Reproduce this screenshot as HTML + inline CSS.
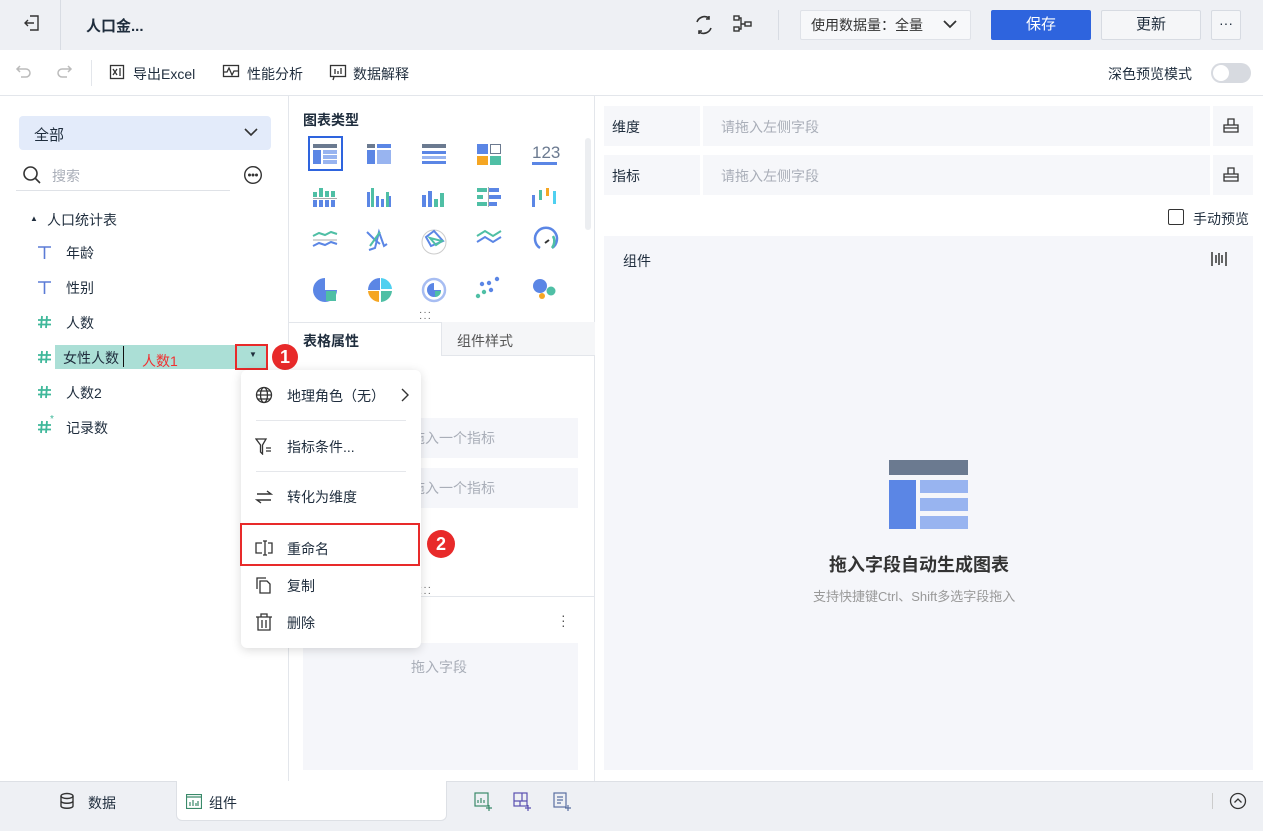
<!DOCTYPE html>
<html><head><meta charset="utf-8"><style>
*{box-sizing:border-box;margin:0;padding:0}
body{width:1263px;height:831px;overflow:hidden;font-family:"Liberation Sans","Noto Sans CJK SC",sans-serif;font-size:14px;color:#1f2d3d;background:#fff;position:relative}
.a{position:absolute}
.top{left:0;top:0;width:1263px;height:50px;background:#eef0f4}
.tb{left:0;top:50px;width:1263px;height:46px;background:#fff;border-bottom:1px solid #e3e6eb}
.btn{border:1px solid #d7dbe2;border-radius:2px;background:#f5f6f8;text-align:center;line-height:28px}
.ph{color:#a9aeb8}
.hs{position:absolute;width:14px;height:14px}
</style></head><body>
<div class="a top"></div>
<svg class="a" style="left:22px;top:13px" width="20" height="20" viewBox="0 0 20 20" fill="none" stroke="#333" stroke-width="1.4"><path d="M8 3h8v14H8M12 10H3M6 7l-3 3 3 3"/></svg>
<div class="a" style="left:60px;top:0;width:1px;height:50px;background:#d8dce3"></div>
<div class="a" style="left:86px;top:15px;font-size:15px;font-weight:bold">人口金...</div>
<svg class="a" style="left:693px;top:14px" width="22" height="22" viewBox="0 0 22 22" fill="none" stroke="#333" stroke-width="1.6"><path d="M4 8a8 8 0 0 1 12-4M18 14a8 8 0 0 1-12 4M16 2v3h-3M6 20v-3h3"/></svg>
<svg class="a" style="left:731px;top:14px" width="22" height="20" viewBox="0 0 22 20" fill="none" stroke="#333" stroke-width="1.4"><rect x="3" y="2" width="5" height="4"/><rect x="3" y="13" width="5" height="4"/><rect x="14" y="8" width="6" height="4"/><path d="M8 4h2v11H8M10 10h4"/></svg>
<div class="a" style="left:778px;top:10px;width:1px;height:30px;background:#d8dce3"></div>
<div class="a btn" style="left:800px;top:10px;width:171px;height:30px;background:#f7f8fa;border-color:#dfe2e8;text-align:left;padding-left:10px;color:#333">使用数据量：全量</div>
<svg class="a" style="left:942px;top:18px" width="16" height="12" viewBox="0 0 16 12" fill="none" stroke="#333" stroke-width="1.8"><path d="M2 3l6 6 6-6"/></svg>
<div class="a" style="left:991px;top:10px;width:100px;height:30px;background:#2e64de;border-radius:2px;color:#fff;text-align:center;line-height:30px;font-size:15px">保存</div>
<div class="a btn" style="left:1101px;top:10px;width:100px;height:30px;font-size:15px">更新</div>
<div class="a btn" style="left:1211px;top:10px;width:30px;height:30px;line-height:24px">···</div>
<div class="a tb"></div>
<svg class="a" style="left:15px;top:63px" width="18" height="18" viewBox="0 0 18 18" fill="none" stroke="#bbb" stroke-width="1.5"><path d="M5 3L2 6l3 3M2 6h9a4 4 0 0 1 0 8H6"/></svg>
<svg class="a" style="left:55px;top:63px" width="18" height="18" viewBox="0 0 18 18" fill="none" stroke="#bbb" stroke-width="1.5"><path d="M13 3l3 3-3 3M16 6H7a4 4 0 0 0 0 8h5"/></svg>
<div class="a" style="left:91px;top:60px;width:1px;height:26px;background:#e3e6eb"></div>
<svg class="a" style="left:109px;top:64px" width="16" height="16" viewBox="0 0 16 16" fill="none" stroke="#333" stroke-width="1.3"><rect x="1.5" y="1.5" width="13" height="13"/><path d="M4 5l4 6M8 5l-4 6M11 4v8"/></svg>
<div class="a" style="left:133px;top:64px">导出Excel</div>
<svg class="a" style="left:222px;top:64px" width="18" height="16" viewBox="0 0 18 16" fill="none" stroke="#333" stroke-width="1.3"><rect x="1.5" y="1.5" width="15" height="11"/><path d="M2 8h3l2-4 3 7 2-4h4"/></svg>
<div class="a" style="left:247px;top:64px">性能分析</div>
<svg class="a" style="left:329px;top:64px" width="18" height="17" viewBox="0 0 18 17" fill="none" stroke="#333" stroke-width="1.3"><rect x="1.5" y="1.5" width="15" height="11"/><path d="M6 5v5M9 7v3M12 4v6M5 13l-1 3"/></svg>
<div class="a" style="left:353px;top:64px">数据解释</div>
<div class="a" style="left:1108px;top:64px">深色预览模式</div>
<div class="a" style="left:1211px;top:63px;width:40px;height:20px;border-radius:10px;background:#d7dae0"></div>
<div class="a" style="left:1213px;top:65px;width:16px;height:16px;border-radius:8px;background:#fff"></div>
<div class="a" style="left:288px;top:96px;width:1px;height:685px;background:#e3e6eb"></div>
<div class="a" style="left:19px;top:116px;width:252px;height:34px;background:#e3ebfa;border-radius:4px;padding:8px 0 0 15px;font-size:15px">全部</div>
<svg class="a" style="left:244px;top:127px" width="14" height="10" viewBox="0 0 14 10" fill="none" stroke="#333" stroke-width="1.6"><path d="M1 2l6 6 6-6"/></svg>
<svg class="a" style="left:22px;top:165px" width="20" height="20" viewBox="0 0 20 20" fill="none" stroke="#333" stroke-width="1.6"><circle cx="8.5" cy="8.5" r="6.5"/><path d="M13.5 13.5l4.5 4.5"/></svg>
<div class="a ph" style="left:52px;top:166px">搜索</div>
<div class="a" style="left:16px;top:190px;width:214px;height:1px;background:#dfe2e7"></div>
<svg class="a" style="left:243px;top:165px" width="20" height="20" viewBox="0 0 20 20" fill="none" stroke="#333" stroke-width="1.4"><circle cx="10" cy="10" r="8.3"/><circle cx="6.5" cy="10" r=".8" fill="#333"/><circle cx="10" cy="10" r=".8" fill="#333"/><circle cx="13.5" cy="10" r=".8" fill="#333"/></svg>
<div class="a" style="left:30px;top:214px;font-size:8px">▲</div>
<div class="a" style="left:47px;top:210px">人口统计表</div>
<svg width="0" height="0" style="position:absolute"><defs><g id="h"><path d="M5 1L4 13M10 1L9 13M1 5h13M1 9.5h13" stroke="#3fb89a" stroke-width="1.8" fill="none"/></g><g id="t"><path d="M1 2h13M7.5 2v12" stroke="#5b7bd6" stroke-width="1.6" fill="none"/></g></defs></svg>
<svg class="hs" style="left:37px;top:245px"><use href="#t"/></svg><div class="a" style="left:66px;top:243px">年龄</div>
<svg class="hs" style="left:37px;top:280px"><use href="#t"/></svg><div class="a" style="left:66px;top:278px">性别</div>
<svg class="hs" style="left:37px;top:315px"><use href="#h"/></svg><div class="a" style="left:66px;top:313px">人数</div>
<svg class="hs" style="left:37px;top:350px"><use href="#h"/></svg>
<div class="a" style="left:55px;top:345px;width:212px;height:24px;background:#abdfd6"></div>
<div class="a" style="left:63px;top:348px">女性人数</div>
<div class="a" style="left:123px;top:346px;width:1px;height:21px;background:#111"></div>
<div class="a" style="left:142px;top:351px;color:#f03030">人数1</div>
<div class="a" style="left:235px;top:344px;width:33px;height:26px;border:2px solid #e82a2a"></div>
<div class="a" style="left:249px;top:350px;font-size:8px">▼</div>
<div class="a" style="left:272px;top:344px;width:26px;height:26px;border-radius:13px;background:#e82a2a;color:#fff;font-weight:bold;font-size:18px;text-align:center;line-height:26px">1</div>
<svg class="hs" style="left:37px;top:385px"><use href="#h"/></svg><div class="a" style="left:66px;top:383px">人数2</div>
<svg class="hs" style="left:37px;top:420px"><use href="#h"/></svg><div class="a" style="left:50px;top:414px;color:#3fb89a;font-size:10px">*</div><div class="a" style="left:66px;top:418px">记录数</div>
<div class="a" style="left:594px;top:96px;width:1px;height:685px;background:#e3e6eb"></div>
<div class="a" style="left:303px;top:110px;font-weight:bold;font-size:14px">图表类型</div>
<div class="a" style="left:585px;top:138px;width:6px;height:92px;background:#eceef1;border-radius:3px"></div>
<div class="a" style="left:308px;top:136px;width:35px;height:35px;border:2px solid #2e64de"></div>
<svg class="a" style="left:300px;top:136px" width="270" height="170" viewBox="0 0 270 170">
<g transform="translate(13,8)"><rect width="24" height="4" fill="#6b7a90"/><rect y="6" width="8" height="14" fill="#5b86e5"/><rect x="10" y="6" width="14" height="4" fill="#98b4f0"/><rect x="10" y="11" width="14" height="4" fill="#98b4f0"/><rect x="10" y="16" width="14" height="4" fill="#98b4f0"/></g>
<g transform="translate(67,8)"><rect width="8" height="4" fill="#6b7a90"/><rect x="10" width="14" height="4" fill="#5b86e5"/><rect y="6" width="8" height="14" fill="#5b86e5"/><rect x="10" y="6" width="14" height="14" fill="#98b4f0"/></g>
<g transform="translate(122,8)"><rect width="24" height="4" fill="#6b7a90"/><rect y="7" width="24" height="3" fill="#5b86e5"/><rect y="12" width="24" height="3" fill="#98b4f0"/><rect y="17" width="24" height="3" fill="#5b86e5"/></g>
<g transform="translate(177,8)"><rect width="11" height="10" fill="#5b86e5"/><rect x="13.5" y=".5" width="10" height="9" fill="none" stroke="#6b7a90"/><rect y="12" width="11" height="9" fill="#f5a623"/><rect x="13" y="12" width="11" height="9" fill="#4fbfa5"/></g>
<text x="232" y="22" font-size="17" fill="#6b7a90" font-family="Liberation Sans">123</text><rect x="232" y="26" width="25" height="3" fill="#5b86e5"/>
<g transform="translate(13,52)"><rect x="6" width="4" height="9" fill="#4fbfa5"/><rect x="12" y="3" width="4" height="6" fill="#4fbfa5"/><rect y="4" width="4" height="5" fill="#4fbfa5"/><rect x="18" y="3" width="4" height="6" fill="#4fbfa5"/><rect y="10" width="24" height="1" fill="#aaa"/><rect y="12" width="4" height="7" fill="#5b86e5"/><rect x="6" y="12" width="4" height="7" fill="#5b86e5"/><rect x="12" y="12" width="4" height="7" fill="#5b86e5"/><rect x="18" y="12" width="4" height="7" fill="#5b86e5"/></g>
<g transform="translate(67,52)"><rect y="4" width="3" height="15" fill="#5b86e5"/><rect x="4" width="3" height="19" fill="#4fbfa5"/><rect x="9" y="8" width="3" height="11" fill="#5b86e5"/><rect x="14" y="11" width="3" height="8" fill="#5b86e5"/><rect x="19" y="4" width="3" height="15" fill="#4fbfa5"/><rect x="22" y="8" width="2" height="11" fill="#5b86e5"/></g>
<g transform="translate(122,52)"><rect y="7" width="4" height="12" fill="#5b86e5"/><rect x="6" y="3" width="4" height="16" fill="#5b86e5"/><rect x="12" y="11" width="4" height="8" fill="#4fbfa5"/><rect x="18" y="5" width="4" height="14" fill="#4fbfa5"/></g>
<g transform="translate(177,52)"><rect width="10" height="4" fill="#4fbfa5"/><rect x="12" width="10" height="4" fill="#5b86e5"/><rect y="7" width="6" height="4" fill="#4fbfa5"/><rect x="12" y="7" width="12" height="4" fill="#5b86e5"/><rect y="14" width="10" height="4" fill="#4fbfa5"/><rect x="12" y="14" width="8" height="4" fill="#5b86e5"/><rect x="11" y="-1" width="1" height="20" fill="#aaa"/></g>
<g transform="translate(232,52)"><rect y="7" width="3" height="12" fill="#5b86e5"/><rect x="7" y="2" width="3" height="10" fill="#4fbfa5"/><rect x="14" width="3" height="8" fill="#f5a623"/><rect x="21" y="3" width="3" height="13" fill="#4fd0f0"/></g>
<g fill="none" stroke-width="2"><path d="M13 100l6-3 6 2 6-3 6 2" stroke="#4fbfa5"/><path d="M13 110l6-3 6 2 6-3 6 2" stroke="#5b86e5"/><path d="M13 104h24" stroke="#aaa" stroke-width="1"/>
<path d="M67 96l8 8 5 4M69 114l6-2 4-16 5 14 3-2" stroke="#5b86e5"/><path d="M70 110l10-14" stroke="#4fbfa5"/>
<circle cx="134" cy="106" r="12" stroke="#ccc" stroke-width="1"/><path d="M126 101l8-6 9 10-12 5z" stroke="#5b86e5"/><path d="M130 102l12 3-6 4z" stroke="#4fbfa5"/>
<path d="M177 100l8-5 8 5 8-5" stroke="#4fbfa5"/><path d="M177 106l8-5 8 5 8-5" stroke="#5b86e5"/>
<path d="M240 112a11 11 0 1 1 12 0" stroke="#5b86e5" stroke-width="2.5"/><path d="M253 100a11 11 0 0 1-1 12" stroke="#4fbfa5" stroke-width="2.5"/><path d="M245 107l4-3" stroke="#333"/></g>
<g transform="translate(25,154)"><path d="M0 0V-12A12 12 0 1 0 12 0Z" fill="#5b86e5"/><rect x="1" y="1" width="10" height="10" fill="#4fbfa5"/></g>
<g transform="translate(80,154)"><path d="M0 0V-12A12 12 0 0 0-12 0Z" fill="#5b86e5"/><path d="M1-1V-12A12 12 0 0 1 12-1Z" fill="#4fd0f0"/><path d="M-1 1H-12A12 12 0 0 0-1 12Z" fill="#f5a623"/><path d="M1 1H12A12 12 0 0 1 1 12Z" fill="#4fbfa5"/></g>
<g transform="translate(134,154)" fill="none"><circle r="11" stroke="#a7bdf2" stroke-width="2.5"/><path d="M0 0V-7A7 7 0 1 0 7 0Z" fill="#5b86e5"/><path d="M1 1H7A6 6 0 0 1 1 7Z" fill="#4fbfa5"/></g>
<g fill="#5b86e5"><circle cx="178" cy="160" r="2.2" fill="#4fbfa5"/><circle cx="184" cy="156" r="2.2" fill="#4fbfa5"/><circle cx="182" cy="148" r="2.2"/><circle cx="189" cy="147" r="2.2"/><circle cx="191" cy="154" r="2.2"/><circle cx="197" cy="143" r="2.2"/></g>
<circle cx="240" cy="150" r="7" fill="#5b86e5"/><circle cx="251" cy="155" r="4.5" fill="#4fbfa5"/><circle cx="242" cy="160" r="3" fill="#f5a623"/>
</svg>
<div class="a" style="left:419px;top:310px;font-size:10px;letter-spacing:1px;line-height:6px;color:#555">···<br>···</div>
<div class="a" style="left:288px;top:322px;width:307px;height:1px;background:#e3e6eb"></div>
<div class="a" style="left:441px;top:322px;width:154px;height:34px;background:#f5f6f8;border-left:1px solid #e3e6eb;border-bottom:1px solid #e3e6eb"></div>
<div class="a" style="left:303px;top:331px;font-weight:bold">表格属性</div>
<div class="a" style="left:457px;top:331px;color:#555">组件样式</div>
<div class="a" style="left:303px;top:418px;width:275px;height:40px;background:#f5f6fa"></div>
<div class="a ph" style="left:411px;top:428px">拖入一个指标</div>
<div class="a" style="left:303px;top:468px;width:275px;height:40px;background:#f5f6fa"></div>
<div class="a ph" style="left:411px;top:478px">拖入一个指标</div>
<div class="a" style="left:419px;top:585px;font-size:10px;letter-spacing:1px;line-height:6px;color:#555">···<br>···</div>
<div class="a" style="left:288px;top:596px;width:307px;height:1px;background:#e3e6eb"></div>
<div class="a" style="left:561px;top:613px;font-size:14px;line-height:5px;color:#555">·<br>·<br>·</div>
<div class="a" style="left:303px;top:643px;width:275px;height:127px;background:#f5f6fa"></div>
<div class="a ph" style="left:411px;top:657px">拖入字段</div>
<div class="a" style="left:604px;top:106px;width:649px;height:40px;background:#f6f7fa"></div>
<div class="a" style="left:700px;top:106px;width:3px;height:40px;background:#fff"></div>
<div class="a" style="left:1210px;top:106px;width:3px;height:40px;background:#fff"></div>
<div class="a" style="left:612px;top:117px">维度</div><div class="a ph" style="left:721px;top:117px">请拖入左侧字段</div>
<div class="a" style="left:604px;top:155px;width:649px;height:40px;background:#f6f7fa"></div>
<div class="a" style="left:700px;top:155px;width:3px;height:40px;background:#fff"></div>
<div class="a" style="left:1210px;top:155px;width:3px;height:40px;background:#fff"></div>
<div class="a" style="left:612px;top:166px">指标</div><div class="a ph" style="left:721px;top:166px">请拖入左侧字段</div>
<svg class="a" style="left:1222px;top:116px" width="18" height="18" viewBox="0 0 18 18" fill="none" stroke="#333" stroke-width="1.3"><path d="M2 16V9h14v7zM6 9V3h6v6M2 12h14"/></svg>
<svg class="a" style="left:1222px;top:165px" width="18" height="18" viewBox="0 0 18 18" fill="none" stroke="#333" stroke-width="1.3"><path d="M2 16V9h14v7zM6 9V3h6v6M2 12h14"/></svg>
<div class="a" style="left:1168px;top:209px;width:16px;height:16px;border:1.4px solid #333;border-radius:2px"></div>
<div class="a" style="left:1193px;top:209px">手动预览</div>
<div class="a" style="left:604px;top:236px;width:649px;height:534px;background:#f5f6fa"></div>
<div class="a" style="left:623px;top:251px">组件</div>
<svg class="a" style="left:1210px;top:250px" width="18" height="18" viewBox="0 0 18 18" stroke="#333" stroke-width="1.5"><path d="M2 2v14M16 2v14M6 5v8M12 5v8M9 3v12"/></svg>
<svg class="a" style="left:889px;top:460px" width="79" height="70" viewBox="0 0 79 70"><rect width="79" height="15" fill="#6b7a90"/><rect y="20" width="27" height="49" fill="#5b86e5"/><rect x="31" y="20" width="48" height="13" fill="#98b4f0"/><rect x="31" y="38" width="48" height="13" fill="#98b4f0"/><rect x="31" y="56" width="48" height="13" fill="#98b4f0"/></svg>
<div class="a" style="left:829px;top:551px;font-size:18px;font-weight:bold;color:#333">拖入字段自动生成图表</div>
<div class="a" style="left:813px;top:586px;font-size:13px;color:#999">支持快捷键Ctrl、Shift多选字段拖入</div>
<div class="a" style="left:241px;top:370px;width:180px;height:278px;background:#fff;border-radius:6px;box-shadow:0 2px 10px rgba(0,0,0,.15)"></div>
<svg class="a" style="left:255px;top:386px" width="18" height="18" viewBox="0 0 18 18" fill="none" stroke="#333" stroke-width="1.3"><circle cx="9" cy="9" r="7.5"/><ellipse cx="9" cy="9" rx="3.5" ry="7.5"/><path d="M1.5 9h15M3 5h12M3 13h12"/></svg>
<div class="a" style="left:287px;top:386px">地理角色（无）</div>
<svg class="a" style="left:400px;top:387px" width="10" height="16" viewBox="0 0 10 16" fill="none" stroke="#333" stroke-width="1.4"><path d="M2 2l6 6-6 6"/></svg>
<div class="a" style="left:256px;top:420px;width:150px;height:1px;background:#e5e7eb"></div>
<svg class="a" style="left:255px;top:437px" width="18" height="18" viewBox="0 0 18 18" fill="none" stroke="#333" stroke-width="1.3"><path d="M1 2h10L7.5 8v9l-2-2V8zM11 11h5M11 14h5"/></svg>
<div class="a" style="left:287px;top:437px">指标条件...</div>
<div class="a" style="left:256px;top:471px;width:150px;height:1px;background:#e5e7eb"></div>
<svg class="a" style="left:255px;top:488px" width="18" height="18" viewBox="0 0 18 18" fill="none" stroke="#333" stroke-width="1.4"><path d="M2 6h14l-4-3M16 12H2l4 3"/></svg>
<div class="a" style="left:287px;top:487px">转化为维度</div>
<div class="a" style="left:240px;top:523px;width:180px;height:43px;border:2px solid #e82a2a"></div>
<svg class="a" style="left:255px;top:539px" width="18" height="18" viewBox="0 0 18 18" fill="none" stroke="#333" stroke-width="1.3"><path d="M7 4H1v10h6M13 4h4v10h-4M8 2h4M8 16h4M10 2v14"/></svg>
<div class="a" style="left:287px;top:539px">重命名</div>
<div class="a" style="left:427px;top:530px;width:28px;height:28px;border-radius:14px;background:#e82a2a;color:#fff;font-weight:bold;font-size:18px;text-align:center;line-height:28px">2</div>
<svg class="a" style="left:255px;top:576px" width="18" height="18" viewBox="0 0 18 18" fill="none" stroke="#333" stroke-width="1.3"><path d="M2 13V2h9"/><path d="M5 5h7l3 3v9H5z"/></svg>
<div class="a" style="left:287px;top:576px">复制</div>
<svg class="a" style="left:255px;top:613px" width="18" height="18" viewBox="0 0 18 18" fill="none" stroke="#333" stroke-width="1.3"><path d="M1 4h16M6 4V1h6v3M3 4v13h12V4M7 7v8M11 7v8"/></svg>
<div class="a" style="left:287px;top:613px">删除</div>
<div class="a" style="left:0;top:781px;width:1263px;height:50px;background:#eef0f4;border-top:1px solid #dde0e5"></div>
<div class="a" style="left:176px;top:781px;width:271px;height:40px;background:#fff;border:1px solid #dde0e5;border-top:none;border-radius:0 0 6px 6px"></div>
<svg class="a" style="left:59px;top:792px" width="16" height="18" viewBox="0 0 16 18" fill="none" stroke="#333" stroke-width="1.4"><ellipse cx="8" cy="4" rx="6" ry="2.5"/><path d="M2 4v10c0 3 12 3 12 0V4M2 9c0 3 12 3 12 0"/></svg>
<div class="a" style="left:88px;top:793px">数据</div>
<svg class="a" style="left:186px;top:794px" width="16" height="15" viewBox="0 0 16 15" fill="none" stroke="#3a8a6a" stroke-width="1.2"><rect x=".5" y=".5" width="15" height="14"/><path d="M1 3h14M4 12V8M7 12V6M10 12V9M12 12V7"/></svg>
<div class="a" style="left:209px;top:793px">组件</div>
<svg class="a" style="left:474px;top:792px" width="20" height="20" viewBox="0 0 20 20" fill="none" stroke="#3a8a6a" stroke-width="1.2"><rect x="1" y="1" width="13" height="13"/><path d="M4 11V8M7 11V6M10 11V8M15 13v6M12 16h6"/></svg>
<svg class="a" style="left:513px;top:792px" width="20" height="20" viewBox="0 0 20 20" fill="none" stroke="#5a4fb0" stroke-width="1.2"><rect x="1" y="1" width="13" height="13"/><path d="M1 9h13M7 9v5M9 1v8M15 13v6M12 16h6"/></svg>
<svg class="a" style="left:553px;top:792px" width="20" height="20" viewBox="0 0 20 20" fill="none" stroke="#5a6fa0" stroke-width="1.2"><rect x="1" y="1" width="12" height="14"/><path d="M4 5h6M4 8h6M4 11h4M15 13v6M12 16h6"/></svg>
<div class="a" style="left:1212px;top:793px;width:1px;height:16px;background:#ccc"></div>
<svg class="a" style="left:1229px;top:792px" width="18" height="18" viewBox="0 0 18 18" fill="none" stroke="#333" stroke-width="1.3"><circle cx="9" cy="9" r="7.5"/><path d="M5.5 10.5L9 7l3.5 3.5"/></svg>
</body></html>
